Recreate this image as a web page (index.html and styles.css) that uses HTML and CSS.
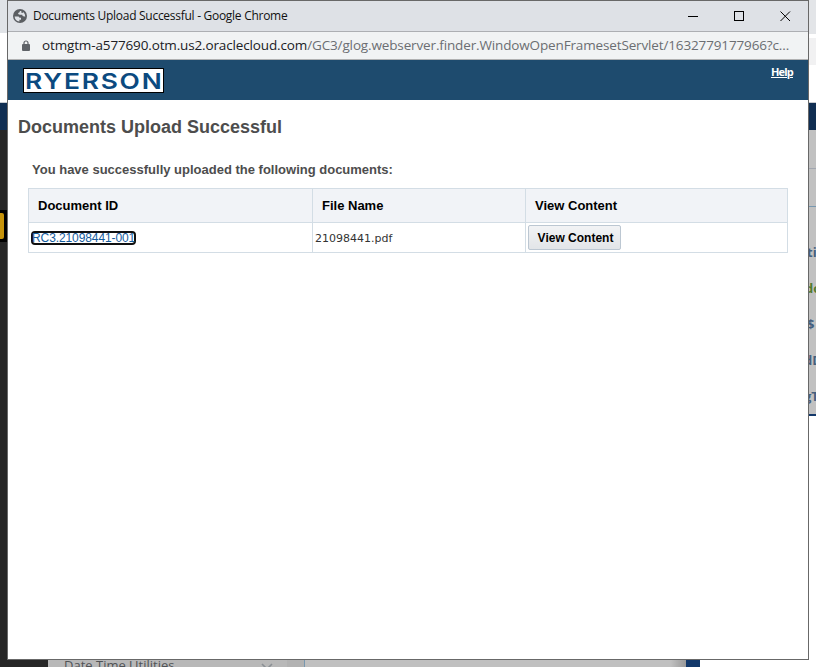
FILE: index.html
```html
<!DOCTYPE html>
<html lang="en">
<head>
<meta charset="utf-8">
<title>Documents Upload Successful</title>
<link rel="stylesheet" href="styles.css">
</head>
<body>
<div class="desktop">
  <div class="edge-left"><div class="gold-slot"><i></i></div></div>
  <main class="window">
    <header class="titlebar">
      <svg class="globe" width="14" height="14" viewBox="0 0 14 14"><circle cx="7" cy="7" r="7" fill="#5b5e62"/><path d="M1.600 7.400H5q1.400 0 1.400 1.300H8v2.100H6.400v1.600Q2 11.800 1.600 7.400Z M7 2Q6.600 3.900 5 4 5 5.800 7 5.800H9.200Q9.200 8 12.300 7.400 12.300 4.500 10.200 2.900L9.600 4 8.200 3.500 8.400 2Z" fill="#dee1e6"/></svg>
      <span class="caption">Documents Upload Successful - Google Chrome</span>
      <svg class="controls" width="104" height="12" viewBox="0 0 104 12" fill="none" stroke="#000"><path d="M0 6.500H10"/><rect x="46.500" y="1.500" width="9" height="9"/><path d="M92.500 1.500L102 11M102 1.500L92.500 11"/></svg>
    </header>
    <div class="address">
      <svg class="lock" width="8" height="11" viewBox="0 0 8 11"><path d="M2 5V3a2 2 0 0 1 4 0v2" fill="none" stroke="#5f6368" stroke-width="1.200"/><rect y="4" width="8" height="7" rx="1" fill="#5f6368"/></svg>
      <span class="url"><b>otmgtm-a577690.otm.us2.oraclecloud.com</b>/GC3/glog.webserver.finder.WindowOpenFramesetServlet/1632779177966?c...</span>
    </div>
    <div class="brandbar">
      <svg class="logo" width="141" height="25" viewBox="0 0 141 25"><rect x=".5" y=".5" width="140" height="24" fill="#fff" stroke="#000"/><text x="2" y="20.500" textLength="138.500" lengthAdjust="spacingAndGlyphs">RYERSON</text></svg>
      <a class="help">Help</a>
    </div>
    <section class="content">
      <h1>Documents Upload Successful</h1>
      <p>You have successfully uploaded the following documents:</p>
      <table>
        <colgroup><col class="c1"><col class="c2"><col class="c3"></colgroup>
        <tr><th>Document ID</th><th>File Name</th><th>View Content</th></tr>
        <tr><td><a class="doc">RC3.21098441-001</a></td><td class="file">21098441.pdf</td><td><button>View Content</button></td></tr>
      </table>
    </section>
  </main>
  <div class="edge-right"><span>tio</span><span class="green">do</span><span>$</span><span class="deep">dD</span><span class="deep">gT</span></div>
  <footer class="edge-bottom">
    <div class="dark"></div>
    <div class="menu"><span>Date Time Utilities</span><svg width="12" height="8" viewBox="0 0 12 8"><path d="M1 1L6 6 11 1" fill="none" stroke="#8b9095" stroke-width="1.600"/></svg></div>
    <div class="gutter"></div><div class="pane"></div><div class="blue"></div>
  </footer>
</div>
</body>
</html>
```
FILE: styles.css
```css
* { box-sizing: border-box; }
body { margin: 0; background: #fff; overflow: hidden; }
.desktop { width: 816px; height: 667px; overflow: hidden; display: grid; grid-template: 660px 7px / 7px 802px 7px; }
.edge-left { padding-top: 210px; width: 8px; background: linear-gradient(#e0e3e7 0 33px, #fff 33px 102px, #c8cbd0 102px 103px, #102e52 103px 130px, #262626 130px); }
.gold-slot { width: 7px; height: 32px; padding-top: 3px; background: #000; }
.gold-slot i { display: block; width: 4px; height: 26px; background: #c6930a; border-radius: 0 2px 2px 0; }
.window { background: #fff; border: 1px solid #686868; font-family: "Liberation Sans", Arial, sans-serif; }
.titlebar { height: 31px; background: #dee1e6; border-bottom: 1px solid #adafb3; display: flex; align-items: center; padding: 0 16px 1px 5px; font: 12px "Open Sans", "Noto Sans", sans-serif; color: #111; }
.caption { margin-left: 6px; white-space: nowrap; letter-spacing: -.28px; }
.controls { margin: 1px 0 0 auto; }
.address { height: 28px; background: #f1f3f4; border-bottom: 1px solid #b0b1b2; display: flex; align-items: center; padding: 0 0 1px 14px; font: 13.500px "Open Sans", "Noto Sans", sans-serif; color: #6b6e72; }
.lock { flex: none; }
.url { margin-left: 12px; white-space: nowrap; letter-spacing: -.14px; }
.url b { font-weight: 400; color: #202124; }
.brandbar { height: 40px; background: #1e4b6e; display: flex; justify-content: space-between; align-items: flex-start; padding: 8px 15px 0; }
.logo text { font: 600 22px Inter, "Liberation Sans", sans-serif; letter-spacing: 1.500px; fill: #0b4a80; }
.help { margin-top: -3px; font: bold 11px/13px "Open Sans", sans-serif; color: #fff; text-decoration: underline; letter-spacing: -.8px; }
.content { padding: 16px 20px 0; }
h1 { margin: 0 0 0 -10px; font-size: 18px; line-height: 22px; color: #4d4d4d; white-space: nowrap; }
p { margin: 24px 0 0 4px; font-weight: bold; font-size: 13px; line-height: 16px; color: #4d4d4d; }
table { margin-top: 10px; width: 760px; table-layout: fixed; border-collapse: collapse; }
.c1 { width: 284px; }
.c2 { width: 213px; }
.c3 { width: 262px; }
th, td { border: 1px solid #d3dde5; padding: 0 2px; text-align: left; }
th { height: 34px; padding: 0 9px; background: #f1f3f7; font-size: 13px; color: #000; }
td { height: 30px; font-size: 12px; }
.doc { display: block; width: 105px; height: 14px; border: 2px solid #101010; border-radius: 4px; color: #145c9e; line-height: 11px; white-space: nowrap; text-indent: -1px; letter-spacing: -.1px; }
.file { padding-top: 1px; font-family: "DejaVu Sans", Verdana, sans-serif; font-size: 11px; color: #333; }
button { display: block; width: 93px; height: 25px; padding: 0 0 0 2px; border: 1px solid #bcc7d2; border-radius: 2px; background: linear-gradient(#f2f3f5, #e2e5e8); font: bold 12px "Liberation Sans", sans-serif; color: #000; }
.edge-right { overflow: hidden; padding-top: 234px; font: bold 13px/36px "Open Sans", sans-serif; color: #45607f; background: linear-gradient(#e3e5e8 0 34px, #fff 34px 38px, #f1f1f2 38px 65px, #fff 65px 102px, #c8cbd0 102px 103px, #102e52 103px 130px, #c1c1c1 130px 168px, #a2a7b0 168px 169px, #c1c1c1 169px 206px, #7898b0 206px 207px, #c1c1c1 207px 414px, #12386a 414px 416px, #fff 416px); }
.edge-right span { display: block; height: 36px; margin-left: -2px; white-space: nowrap; }
.edge-right .green { margin-left: -4px; color: #527a2d; }
.edge-right .deep { margin-left: -5px; }
.edge-bottom { grid-column: 1 / -1; display: flex; overflow: hidden; }
.dark { width: 48px; background: #262626; }
.menu { width: 239px; background: #b8b8b8; padding: 0 14px 0 16px; display: flex; justify-content: space-between; font: 13px/18px "Open Sans", sans-serif; color: #505356; }
.menu span { margin-top: -4px; }
.menu svg { margin-top: 3px; }
.gutter { width: 18px; background: #b2b2b2; border-right: 1px solid #7898b0; }
.pane { width: 381px; background: linear-gradient(90deg, #c0c0c0 96%, #999); }
.blue { width: 14px; background: #12386a; }
```
